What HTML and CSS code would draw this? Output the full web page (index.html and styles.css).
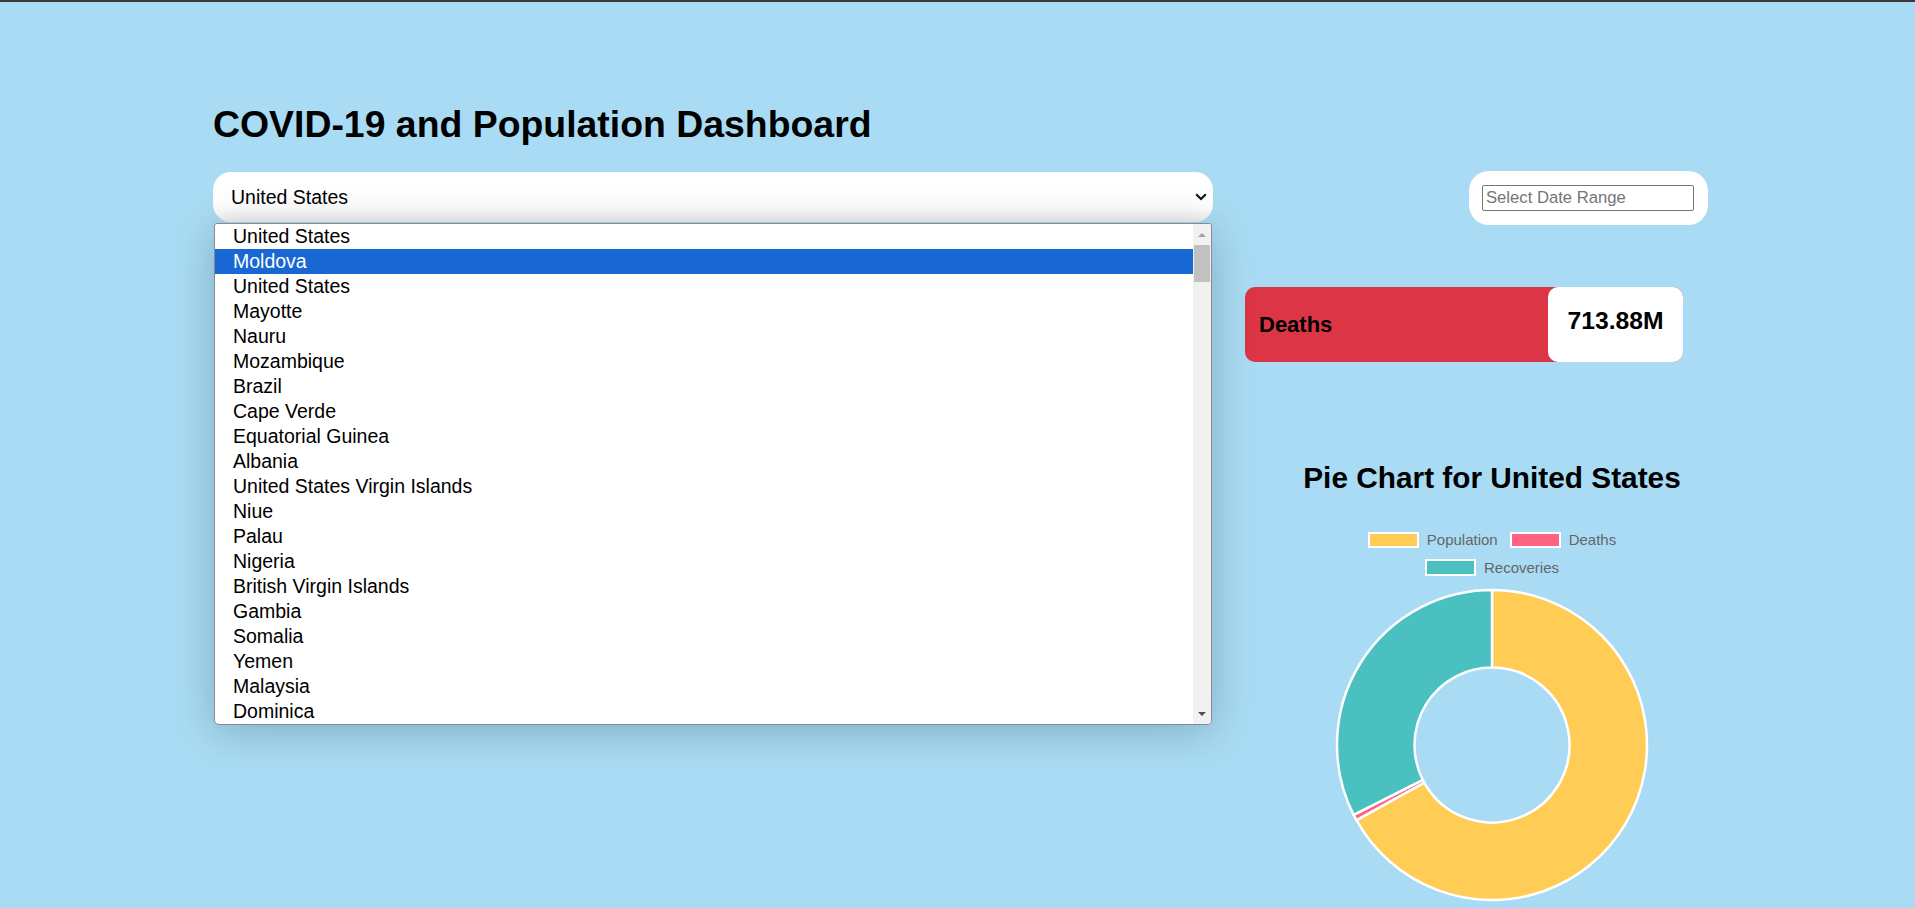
FILE: index.html
```html
<!DOCTYPE html>
<html lang="en">
<head>
<meta charset="utf-8">
<title>COVID-19 and Population Dashboard</title>
<link rel="stylesheet" href="styles.css">
</head>
<body>
<div class="topbar"></div>
<div class="page">
  <h1 class="title">COVID-19 and Population Dashboard</h1>
  <div class="controls">
    <div class="select-wrap">
      <div class="select">
        <span class="select-value">United States</span>
        <svg class="chevron" width="12" height="8" viewBox="0 0 12 8"><path d="M1.2 1.3 L6 6 L10.8 1.3" fill="none" stroke="#111" stroke-width="2.2"/></svg>
      </div>
      <div class="listbox">
        <ul class="options">
          <li>United States</li>
          <li class="selected">Moldova</li>
          <li>United States</li>
          <li>Mayotte</li>
          <li>Nauru</li>
          <li>Mozambique</li>
          <li>Brazil</li>
          <li>Cape Verde</li>
          <li>Equatorial Guinea</li>
          <li>Albania</li>
          <li>United States Virgin Islands</li>
          <li>Niue</li>
          <li>Palau</li>
          <li>Nigeria</li>
          <li>British Virgin Islands</li>
          <li>Gambia</li>
          <li>Somalia</li>
          <li>Yemen</li>
          <li>Malaysia</li>
          <li>Dominica</li>
        </ul>
        <div class="scrollbar">
          <span class="sb-btn"><span class="arrow-up"></span></span>
          <span class="thumb"></span>
          <span class="sb-spacer"></span>
          <span class="sb-btn"><span class="arrow-down"></span></span>
        </div>
      </div>
    </div>
    <div class="date-box">
      <input class="date-input" type="text" placeholder="Select Date Range">
    </div>
  </div>
  <div class="main">
    <div class="left-col"></div>
    <div class="right-col">
      <div class="stat-card">
        <span class="stat-label">Deaths</span>
        <span class="stat-value">713.88M</span>
      </div>
      <section class="chart">
        <h2 class="chart-title">Pie Chart for United States</h2>
        <div class="legend">
          <div class="legend-row">
            <span class="legend-item"><span class="swatch swatch-pop"></span>Population</span>
            <span class="legend-item"><span class="swatch swatch-deaths"></span>Deaths</span>
          </div>
          <div class="legend-row">
            <span class="legend-item"><span class="swatch swatch-rec"></span>Recoveries</span>
          </div>
        </div>
        <svg class="donut" width="320" height="320" viewBox="0 0 320 320">
          <g stroke="#fff" stroke-width="2.5" stroke-linejoin="round">
            <path fill="#ffcd56" d="M160,5 A155,155 0 1 1 24.44,235.14 L92.22,197.57 A77.5,77.5 0 1 0 160,82.5 Z"/>
            <path fill="#ff6384" d="M24.44,235.14 A155,155 0 0 1 21.63,229.89 L90.82,194.94 A77.5,77.5 0 0 0 92.22,197.57 Z"/>
            <path fill="#4bc0c0" d="M21.63,229.89 A155,155 0 0 1 160,5 L160,82.5 A77.5,77.5 0 0 0 90.82,194.94 Z"/>
          </g>
        </svg>
      </section>
    </div>
  </div>
</div>
</body>
</html>
```

FILE: styles.css
```css
* {
  box-sizing: border-box;
}

html,
body {
  margin: 0;
  padding: 0;
}

body {
  background: #a9dcf4;
  font-family: "Liberation Sans", Arial, sans-serif;
  color: #000;
  overflow: hidden;
}

.topbar {
  height: 2px;
  background: #3a3a3a;
}

.page {
  width: 1495px;
  margin-left: 213px;
  padding-top: 101px;
}

.title {
  margin: 0;
  font-size: 37.4px;
  line-height: 43px;
  font-weight: 700;
}

.controls {
  display: flex;
  justify-content: space-between;
  align-items: flex-start;
  margin-top: 25px;
}

.select-wrap {
  position: relative;
  width: 1000px;
  margin-top: 1px;
}

.select {
  height: 50px;
  border-radius: 18px;
  display: flex;
  align-items: center;
  justify-content: space-between;
  padding: 0 6px 0 18px;
  font-size: 19.5px;
  background: linear-gradient(#ffffff 70%, #f0f0f0);
}

.chevron {
  display: block;
}

.listbox {
  position: absolute;
  top: 51px;
  left: 1px;
  right: 1px;
  height: 502px;
  background: #fff;
  border: 1px solid #8a8a8a;
  border-radius: 3px 3px 5px 5px;
  display: flex;
  overflow: hidden;
  box-shadow: 0 6px 44px rgba(0, 20, 40, 0.24);
  z-index: 10;
}

.options {
  list-style: none;
  margin: 0;
  padding: 0;
  flex: 1;
}

.options li {
  height: 25px;
  line-height: 24px;
  padding-left: 18px;
  font-size: 19.5px;
  white-space: nowrap;
}

.options li.selected {
  background: #1967d2;
  color: #fff;
}

.scrollbar {
  width: 18px;
  background: #f1f1f1;
  display: flex;
  flex-direction: column;
  align-items: center;
}

.sb-btn {
  height: 21px;
  width: 100%;
  display: flex;
  align-items: center;
  justify-content: center;
}

.arrow-up {
  width: 0;
  height: 0;
  border-left: 4.5px solid transparent;
  border-right: 4.5px solid transparent;
  border-bottom: 4.5px solid #a3a3a3;
}

.arrow-down {
  width: 0;
  height: 0;
  border-left: 4.5px solid transparent;
  border-right: 4.5px solid transparent;
  border-top: 4.5px solid #505050;
}

.thumb {
  width: 16px;
  height: 37px;
  background: #c1c1c1;
}

.sb-spacer {
  flex: 1;
}

.date-box {
  background: #fff;
  border-radius: 20px;
  padding: 14px 14px 14px 13px;
}

.date-input {
  display: block;
  width: 212px;
  height: 26px;
  border: 1px solid #767676;
  border-radius: 2px;
  padding: 0 3px;
  font-family: "Liberation Sans", Arial, sans-serif;
  font-size: 16.67px;
  color: #000;
  background: #fff;
  outline: none;
}

.date-input::placeholder {
  color: #757575;
}

.main {
  display: grid;
  grid-template-columns: 1000px 463px;
  column-gap: 32px;
  margin-top: 62px;
}

.stat-card {
  width: 438px;
  height: 75px;
  background: #dc3545;
  border-radius: 10px;
  display: flex;
}

.stat-label {
  flex: 1;
  display: flex;
  align-items: center;
  padding-left: 14px;
  font-size: 22px;
  font-weight: 700;
}

.stat-value {
  width: 135px;
  background: #fff;
  border-radius: 10px;
  padding-top: 19px;
  text-align: center;
  font-size: 24.7px;
  line-height: 29px;
  font-weight: 700;
}

.chart {
  width: 494px;
  margin-top: 99px;
  display: flex;
  flex-direction: column;
  align-items: center;
}

.chart-title {
  margin: 0;
  font-size: 29.8px;
  line-height: 34px;
  font-weight: 700;
}

.legend {
  margin-top: 31px;
  display: flex;
  flex-direction: column;
  align-items: center;
}

.legend-row {
  height: 27.5px;
  display: flex;
  align-items: center;
  justify-content: center;
  gap: 12px;
}

.legend-item {
  display: flex;
  align-items: center;
  gap: 8px;
  font-size: 15px;
  color: #666;
}

.swatch {
  width: 51px;
  height: 16.5px;
  border: 2.5px solid #fff;
}

.swatch-pop {
  background: #ffcd56;
}

.swatch-deaths {
  background: #ff6384;
}

.swatch-rec {
  background: #4bc0c0;
}

.donut {
  display: block;
  margin-top: 4px;
}
```
